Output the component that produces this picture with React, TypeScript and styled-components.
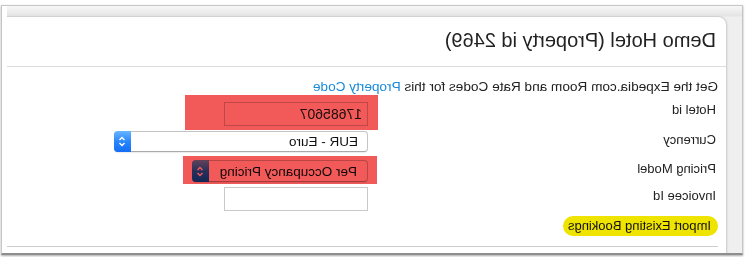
import React from 'react'
import styled, { createGlobalStyle } from 'styled-components'

const GlobalStyle = createGlobalStyle`
  html, body {
    margin: 0;
    padding: 0;
    background: #fff;
  }
  body {
    font-family: "Liberation Sans", Arial, sans-serif;
    color: #222;
  }
`

// the reference is a mirrored screenshot, so the whole stage is flipped
const Stage = styled.div`
  width: 746px;
  height: 257px;
  overflow: hidden;
  background: #fff;
  transform: scaleX(-1);
`

const Frame = styled.div`
  display: flex;
  margin: 5px 1px 0 3px;
  height: 247px;
  border: 1px solid #c6c6c6;
  border-bottom: 2px solid #8e8e8e;
  box-shadow: 0 1px 2px rgba(0, 0, 0, 0.35);
  background: #fff;
  overflow: hidden;
`

const Backdrop = styled.div`
  flex: 1;
  display: flex;
  margin-right: 5px;
  padding: 10px 0 0 15px;
  background: linear-gradient(to bottom, #f7f7f7 0, #e4e4e4 10px, #efefef 11px, #efefef 100%);
`

const Panel = styled.div`
  flex: 1;
  display: flex;
  flex-direction: column;
  background: #fff;
  border-top: 1px solid #d2d2d2;
  border-left: 1px solid #d2d2d2;
  border-top-left-radius: 9px;
  box-shadow: -1px 0 2px rgba(0, 0, 0, 0.06);
`

const Header = styled.div`
  height: 47px;
  display: flex;
  align-items: center;
  padding: 0 0 2px 10px;
  border-bottom: 1px solid #dcdcdc;
  font-size: 20px;
  color: #222;
`

const Body = styled.div`
  display: flex;
  flex-direction: column;
  padding: 11px 0 0 8px;
`

const Intro = styled.div`
  font-size: 13.6px;
  line-height: 18px;
  white-space: nowrap;
`

const Link = styled.a`
  color: #1a8ad8;
  text-decoration: none;
`

const Row = styled.div<{ $top: number }>`
  display: flex;
  align-items: flex-start;
  margin-top: ${p => p.$top}px;
`

const Label = styled.div<{ $pad?: number }>`
  width: 350px;
  box-sizing: border-box;
  padding: ${p => p.$pad || 0}px 0 0 2px;
  font-size: 13px;
  line-height: 18px;
`

const Highlight = styled.div<{ $t: number; $r: number; $b: number; $l: number; $mt?: number }>`
  position: relative;
  display: flex;
  margin-top: ${p => p.$mt || 0}px;
  &::after {
    content: '';
    position: absolute;
    top: ${p => p.$t}px;
    right: ${p => p.$r}px;
    bottom: ${p => p.$b}px;
    left: ${p => p.$l}px;
    background: #f25a5a;
    mix-blend-mode: multiply;
    pointer-events: none;
  }
`

const TextInput = styled.input<{ $mt?: number }>`
  width: 144px;
  height: 24px;
  box-sizing: border-box;
  margin: ${p => p.$mt || 0}px 0 0 0;
  padding: 0 5px;
  border: 1px solid #c9c9c9;
  border-radius: 0;
  background: #fff;
  font-family: "Liberation Sans", Arial, sans-serif;
  font-size: 14px;
  color: #222;
  outline: none;
`

const SelectBox = styled.div<{ $w: number; $h: number; $pad: number; $mt?: number }>`
  width: ${p => p.$w}px;
  height: ${p => p.$h}px;
  box-sizing: border-box;
  margin-top: ${p => p.$mt || 0}px;
  display: flex;
  align-items: center;
  padding-left: ${p => p.$pad}px;
  border: 1px solid #c4c4c4;
  border-bottom-color: #a9a9a9;
  border-radius: 4px;
  background: #fff;
  box-shadow: 0 1px 1px rgba(0, 0, 0, 0.08);
  font-size: 13.5px;
  color: #111;
`

const SelectText = styled.span`
  flex: 1;
  white-space: nowrap;
`

const Stepper = styled.div`
  width: 17px;
  align-self: stretch;
  margin: -1px -1px -1px 0;
  display: flex;
  align-items: center;
  justify-content: center;
  border-radius: 0 4px 4px 0;
  background: linear-gradient(to bottom, #68b6ff 0%, #2a86fb 50%, #136ef5 100%);
`

const Pill = styled.div`
  align-self: flex-start;
  margin-top: 5px;
  height: 20px;
  line-height: 20px;
  padding: 0 5px 0 7px;
  border-radius: 10px;
  background: #efe300;
  font-size: 13px;
  color: #111;
  white-space: nowrap;
`

const Rule = styled.div`
  margin-top: 10px;
  border-top: 1px solid #cdcdcd;
`

function Chevrons() {
  return (
    <svg width="8" height="13" viewBox="0 0 8 13">
      <path d="M1.5 5 L4 2.5 L6.5 5 M1.5 8 L4 10.5 L6.5 8" fill="none" stroke="#fff" strokeWidth="1.4" />
    </svg>
  )
}

export default function App() {
  return (
    <Stage>
      <GlobalStyle />
      <Frame>
        <Backdrop>
          <Panel>
            <Header>Demo Hotel (Property id 2469)</Header>
            <Body>
              <Intro>
                Get the Expedia.com Room and Rate Codes for this <Link href="#">Property Code</Link>
              </Intro>
              <Row $top={5}>
                <Label>Hotel id</Label>
                <Highlight $t={-7} $r={-39} $b={-4} $l={-10} $mt={1}>
                  <TextInput defaultValue="17685607" readOnly />
                </Highlight>
              </Row>
              <Row $top={5}>
                <Label>Currency</Label>
                <SelectBox $w={254} $h={21} $pad={9}>
                  <SelectText>EUR - Euro</SelectText>
                  <Stepper><Chevrons /></Stepper>
                </SelectBox>
              </Row>
              <Row $top={5}>
                <Label $pad={3}>Pricing Model</Label>
                <Highlight $t={-4} $r={-9} $b={-2} $l={-9} $mt={3}>
                  <SelectBox $w={176} $h={22} $pad={10}>
                    <SelectText>Per Occupancy Pricing</SelectText>
                    <Stepper><Chevrons /></Stepper>
                  </SelectBox>
                </Highlight>
              </Row>
              <Row $top={5}>
                <Label>Invoicee Id</Label>
                <TextInput defaultValue="" readOnly />
              </Row>
              <Pill>Import Existing Bookings</Pill>
              <Rule />
            </Body>
          </Panel>
        </Backdrop>
      </Frame>
    </Stage>
  )
}
